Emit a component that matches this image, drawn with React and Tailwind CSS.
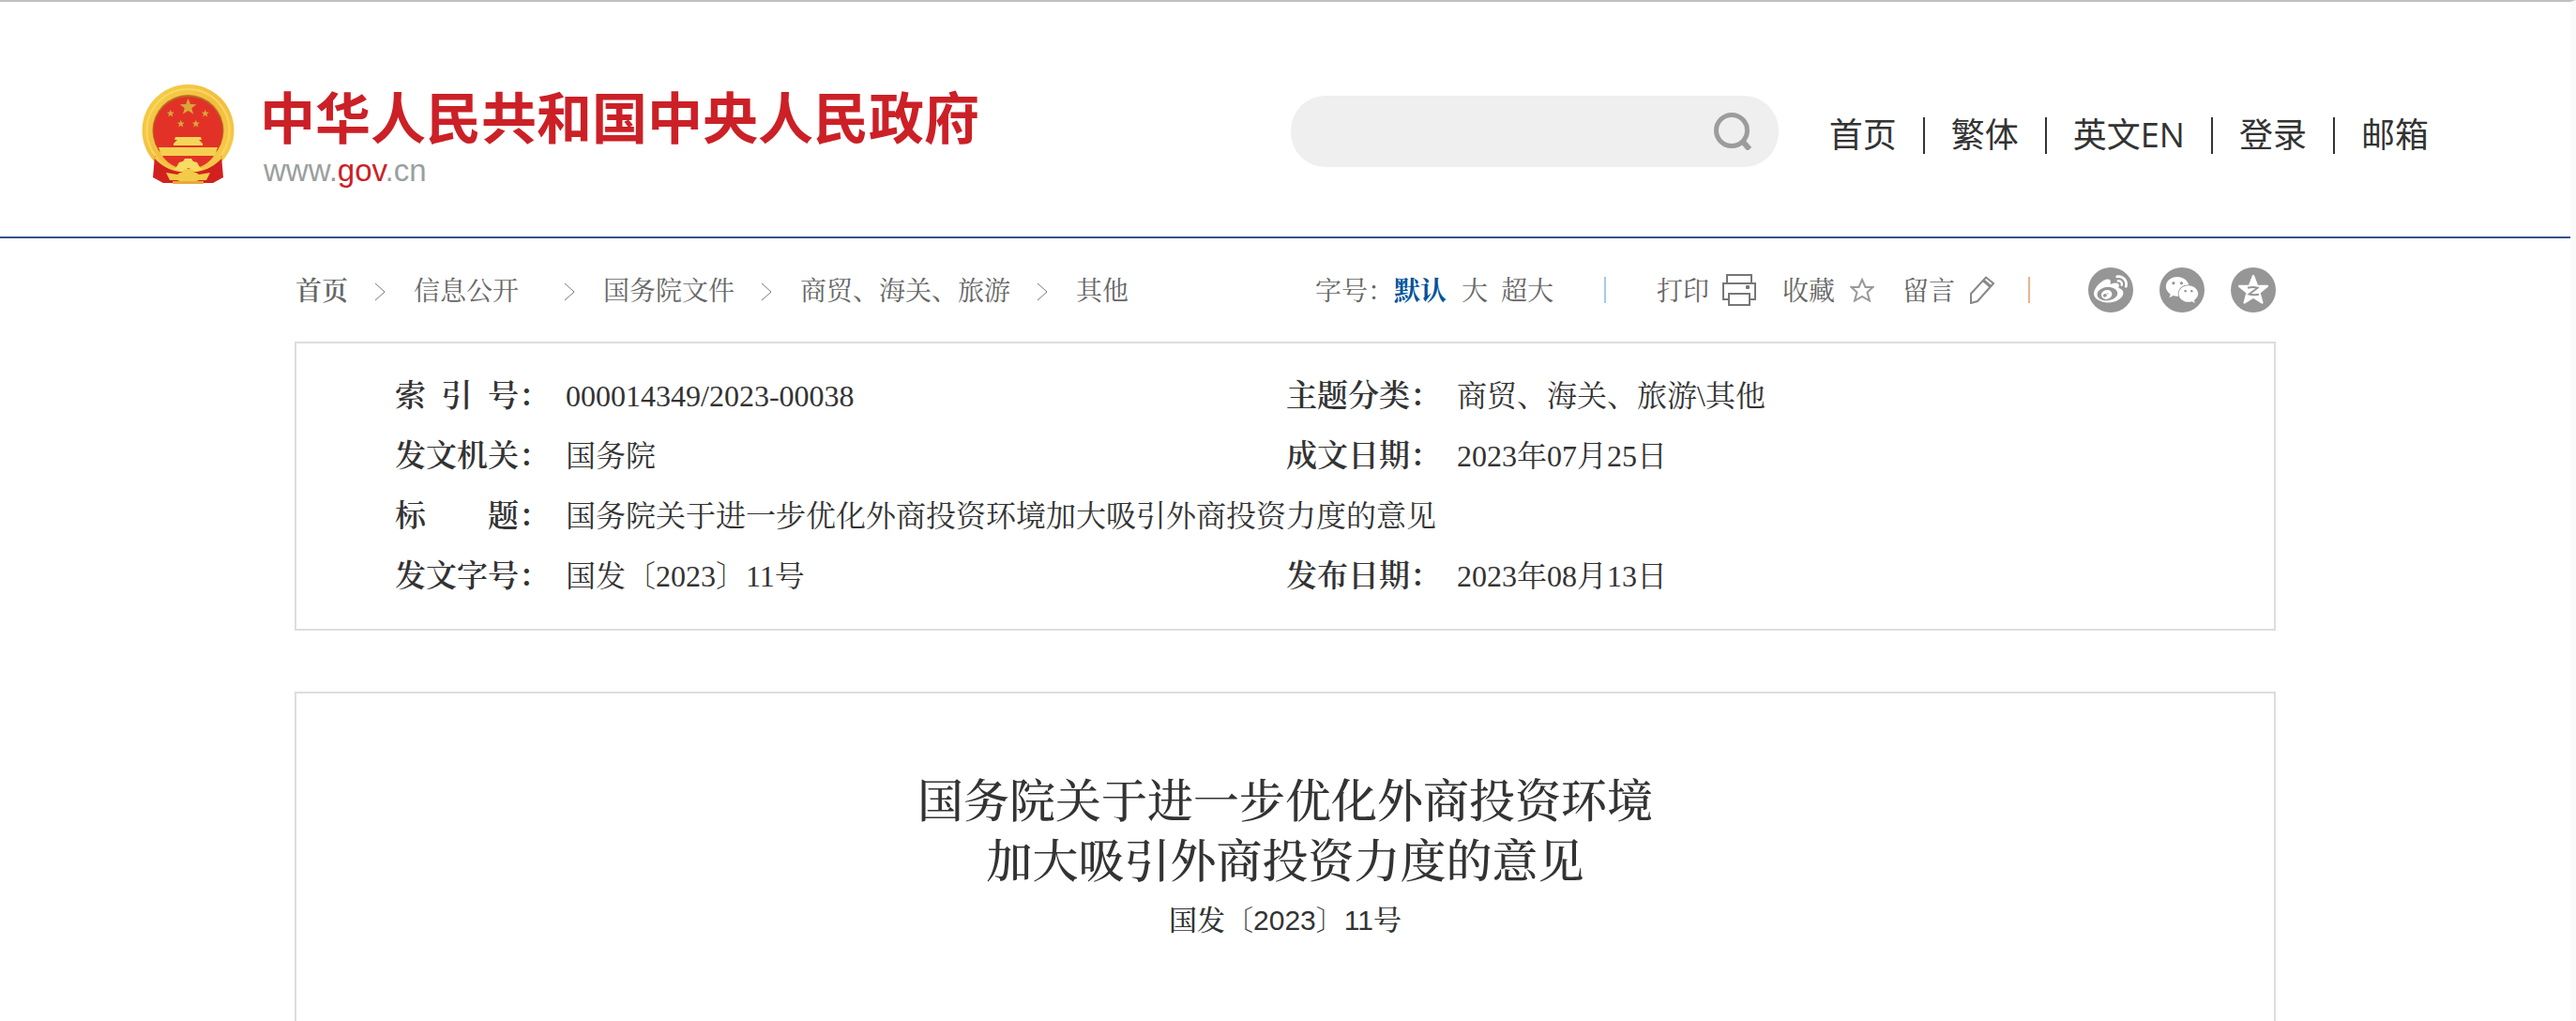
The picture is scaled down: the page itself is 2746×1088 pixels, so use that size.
import { FaWeibo, FaWeixin } from 'react-icons/fa';

const navLinks = ['首页', '繁体', '英文EN', '登录', '邮箱'];

const crumbs = [
  { name: '首页', className: 'font-semibold mr-7' },
  { name: '信息公开', className: 'mr-12' },
  { name: '国务院文件', className: 'mr-7' },
  { name: '商贸、海关、旅游', className: 'mr-7' },
  { name: '其他', className: '' },
];

const star = '12,2 14.7,9 22,9.3 16.3,13.9 18.3,21 12,17 5.7,21 7.7,13.9 2,9.3 9.3,9';

function SmallStar({ x, y, s }) {
  return <polygon points={star} transform={`translate(${x} ${y}) scale(${s})`} fill="#d9a63a" />;
}

function Emblem() {
  return (
    <svg viewBox="0 0 99 106" className="w-[99px] h-[106px] shrink-0" aria-hidden="true">
      <defs>
        <linearGradient id="gold" x1="0" y1="0" x2="1" y2="1">
          <stop offset="0" stopColor="#f6d04a" />
          <stop offset="0.5" stopColor="#f3bd3f" />
          <stop offset="1" stopColor="#f6d04a" />
        </linearGradient>
      </defs>
      <circle cx="49.5" cy="49" r="49" fill="url(#gold)" />
      <circle cx="49.5" cy="49" r="44" fill="none" stroke="#f7d860" strokeWidth="2" />
      <circle cx="49.5" cy="49" r="38" fill="#b5701f" />
      <circle cx="49.5" cy="50" r="37" fill="#e23227" />
      <SmallStar x={39} y={13} s={0.88} />
      <SmallStar x={26} y={26} s={0.4} />
      <SmallStar x={63} y={26} s={0.4} />
      <SmallStar x={37} y={37} s={0.4} />
      <SmallStar x={53} y={37} s={0.4} />
      {/* 天安门 */}
      <path d="M36 56h27l1 3h-3l4 4v2H34v-2l4-4h-3z" fill="#f4d75a" />
      <path d="M18 67h63l-3 9H21z" fill="#f4cf52" />
      <path d="M22 76c6 9 16 14 27.500 14s21.500-5 27.500-14z" fill="#e23227" />
      {/* 红绶与齿轮 */}
      <path d="M14 76c8 9 20 14 35.500 14s27-5 35.500-14l2 23-11 6H23l-11-6z" fill="#d2201f" />
      <path d="M16 76c8 10 20 14 33.500 14s25.500-4 33.500-14l3 2c-8 9-18 14-28 15H41C31 92 21 87 13 78z" fill="#f4c748" />
      <path d="M37 88l3-5 4-1 2-3h7l2 3 4 1 3 5 3 2-7 3-8-4-8 4-8-3z" fill="#f7dc62" />
      <path d="M26 94l12 2c6-5 17-5 23 0l12-2-4 8h-8c-6 3-17 3-23 0h-8z" fill="#f3cb48" />
      <path d="M33 103h33v3H33z" fill="#e8a93a" />
    </svg>
  );
}

function SiteHeader() {
  return (
    <header className="border-b-2 border-[#335588] h-[252px]">
      <div className="max-w-[2438px] mx-auto flex items-start">
        <a href="#" className="flex items-start pt-[88px]">
          <Emblem />
          <span className="flex flex-col ml-[27px]">
            <span className="text-[59px] leading-[66px] font-bold text-[#cc2027] font-['Noto_Sans_CJK_SC',sans-serif]">
              中华人民共和国中央人民政府
            </span>
            <span className="mt-2 text-[33px] leading-9 ml-1 font-['Liberation_Sans',sans-serif] text-[#9a9f9f]">
              www.<span className="text-[#cc2027]">gov</span>.cn
            </span>
          </span>
        </a>

        <form className="ml-auto mt-[100px] w-[520px] h-[76px] rounded-[37px] bg-[#efefef] flex items-center pl-8 pr-[29px]">
          <input type="text" aria-label="搜索" className="flex-1 min-w-0 h-full bg-transparent text-3xl outline-none" />
          <button type="button" aria-label="搜索">
            <svg viewBox="0 0 40 40" className="w-10 h-10" fill="none" stroke="#9c9c9c">
              <circle cx="19" cy="19" r="16.500" strokeWidth="5" />
              <path d="M30 30l8 9" strokeWidth="6" />
            </svg>
          </button>
        </form>

        <nav className="flex items-center ml-[54px] mt-[116px] text-4xl leading-[52px] text-[#333]">
          {navLinks.map((name, i) => (
            <span key={name} className="flex items-center">
              {i > 0 && <span className="w-[2px] h-[39px] mx-7 bg-[#333]" />}
              <a href="#" className="font-['Open_Sans','Noto_Sans_CJK_SC',sans-serif]">{name}</a>
            </span>
          ))}
        </nav>
      </div>
    </header>
  );
}

function ShareIcon({ label, children }) {
  return (
    <a href="#" aria-label={label} className="w-12 h-12 rounded-full bg-[#969696] text-white flex items-center justify-center">
      {children}
    </a>
  );
}

function ToolButton({ label, className, children }) {
  return (
    <button type="button" className={className}>
      <span className="pt-[3px]">{label}</span>
      {children}
    </button>
  );
}

function Toolbar() {
  return (
    <div className="flex items-center h-[110px] text-[28px] leading-10 text-[#666]">
      <nav className="flex items-center pt-[3px] pl-px">
        {crumbs.map((item, i) => (
          <span key={item.name} className="flex items-center">
            {i > 0 && (
              <svg viewBox="0 0 12 20" className="w-3 h-5 mr-[30px]" fill="none" stroke="#777">
                <path d="M1 1l10 9L1 19" />
              </svg>
            )}
            <a href="#" className={item.className}>{item.name}</a>
          </span>
        ))}
      </nav>

      <div className="flex items-center ml-auto">
        <div className="flex items-center pt-[3px]">
          <span>字号：</span>
          <button type="button" className="font-bold text-[#00529b]">默认</button>
          <button type="button" className="ml-4">大</button>
          <button type="button" className="ml-[14px]">超大</button>
        </div>
        <span className="w-[2px] h-7 bg-[#a5c8ee] mx-[54px]" />
        <ToolButton label="打印" className="flex items-center gap-[14px]">
          <svg viewBox="0 0 36 34" className="w-9 h-[34px]" fill="none" stroke="#777" strokeWidth="2">
            <path d="M5 10V1h26v9" />
            <path d="M7 27H1V10h34v17h-6" />
            <path d="M7 21h22v12H7z" />
            <path d="M27 12v4M25 14h4" strokeWidth="3" />
          </svg>
        </ToolButton>
        <ToolButton label="收藏" className="flex items-center gap-4 ml-7">
          <svg viewBox="0 0 26 26" className="w-[26px] h-[26px]" fill="none" stroke="#999" strokeWidth="2">
            <path d="M13 2l3.500 8h8l-6 5.500 2.500 9-8-4.500-8 4.500 2.500-9L1.500 10h8z" />
          </svg>
        </ToolButton>
        <ToolButton label="留言" className="flex items-center gap-4 ml-[30px]">
          <svg viewBox="0 0 26 30" className="w-[26px] h-[30px]" fill="none" stroke="#888" strokeWidth="2">
            <path d="M1 29V19L17 1.500 25 8 8 27z" />
            <path d="M14 4.500l8 7" strokeWidth="3" />
          </svg>
        </ToolButton>
        <span className="w-[2px] h-7 bg-[#e9b48c] ml-9" />
        <div className="flex gap-7 ml-[62px]">
          <ShareIcon label="微博"><FaWeibo className="w-9 h-9" /></ShareIcon>
          <ShareIcon label="微信"><FaWeixin className="w-9 h-9" /></ShareIcon>
          <ShareIcon label="QQ空间">
            <svg viewBox="0 0 24 24" className="w-9 h-9">
              <polygon points={star} fill="#fff" stroke="#fff" strokeWidth="1.500" strokeLinejoin="round" />
              <path d="M8 10.500q4-1 7 0l-6 4.500q3 .8 7 .2" fill="none" stroke="#969696" strokeWidth="1.300" />
            </svg>
          </ShareIcon>
        </div>
      </div>
    </div>
  );
}

function Label({ children }) {
  return <th scope="row" className="p-0 pt-[2px] text-left text-[33px] font-semibold whitespace-pre">{children}</th>;
}

function InfoTable() {
  return (
    <section className="border-2 border-[#ddd] py-6 pl-[105px]">
      <table className="w-full table-fixed text-[32px] text-[#333]">
        <colgroup>
          <col className="w-[182px]" />
          <col className="w-[768px]" />
          <col className="w-[182px]" />
          <col />
        </colgroup>
        <tbody>
          <tr className="h-16">
            <Label>索&ensp;引&ensp;号：</Label>
            <td className="p-0">000014349/2023-00038</td>
            <Label>主题分类：</Label>
            <td className="p-0">商贸、海关、旅游\其他</td>
          </tr>
          <tr className="h-16">
            <Label>发文机关：</Label>
            <td className="p-0">国务院</td>
            <Label>成文日期：</Label>
            <td className="p-0">2023年07月25日</td>
          </tr>
          <tr className="h-16">
            <Label>标&emsp;&emsp;题：</Label>
            <td className="p-0" colSpan={3}>国务院关于进一步优化外商投资环境加大吸引外商投资力度的意见</td>
          </tr>
          <tr className="h-16">
            <Label>发文字号：</Label>
            <td className="p-0">国发〔2023〕11号</td>
            <Label>发布日期：</Label>
            <td className="p-0">2023年08月13日</td>
          </tr>
        </tbody>
      </table>
    </section>
  );
}

export default function App() {
  return (
    <div
      lang="zh-CN"
      className="h-screen overflow-hidden flex flex-col bg-white border-t-2 border-t-[#c0c0c0] border-r-[6px] border-r-[#fafafa] font-['Liberation_Serif','Noto_Serif_CJK_SC','Noto_Sans_CJK_SC',serif]"
    >
      <SiteHeader />
      <main className="w-full max-w-[2112px] mx-auto flex-1 flex flex-col">
        <Toolbar />
        <InfoTable />
        <article className="flex-1 mt-[65px] border-2 border-b-0 border-[#ddd] pt-[84px] text-center text-[#333]">
          <h1 className="text-[49px] leading-[64px] font-medium">
            国务院关于进一步优化外商投资环境
            <br />
            加大吸引外商投资力度的意见
          </h1>
          <p className="mt-[6px] text-[30px] leading-[48px] font-medium font-['Liberation_Sans','Noto_Serif_CJK_SC','Noto_Sans_CJK_SC',sans-serif]">
            国发〔2023〕11号
          </p>
        </article>
      </main>
    </div>
  );
}
